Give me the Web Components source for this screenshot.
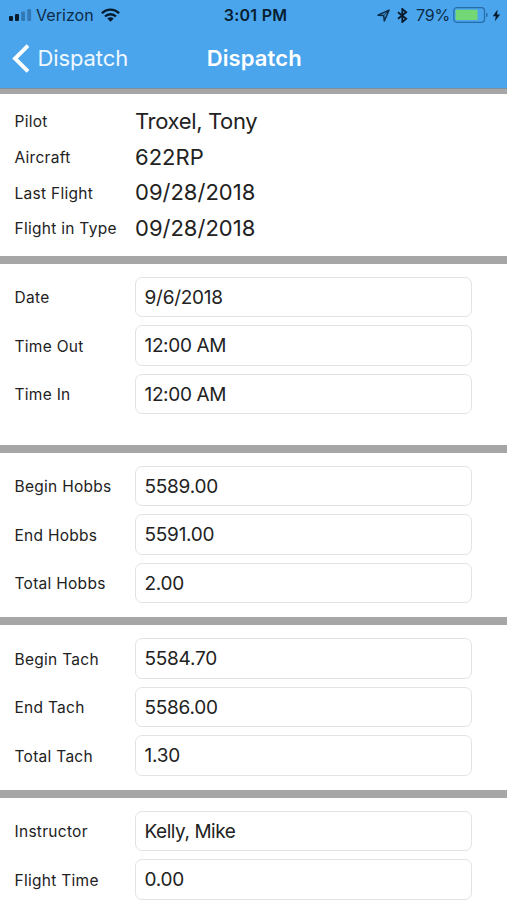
<!DOCTYPE html>
<html lang="en">
<head>
<meta charset="utf-8">
<title>Dispatch</title>
<style>
html,body{margin:0;padding:0}
body{width:507px;height:900px;overflow:hidden;background:#fff;font-family:Inter,"Liberation Sans",sans-serif;color:#222}
</style>
</head>
<body>
<dispatch-app></dispatch-app>
<script>
function define(name, markup){
  const t=document.createElement('template');
  t.innerHTML=markup;
  customElements.define(name,class extends HTMLElement{
    constructor(){super();this.attachShadow({mode:'open'}).appendChild(t.content.cloneNode(true));}
  });
}
define('status-bar',`<style>
:host{display:grid;grid-template-columns:1fr auto 1fr;align-items:center;height:30px;color:#0c2c48;font-size:16px}
div{display:flex;align-items:center}
svg{display:block;flex:none}
.l{padding-left:8px}.carrier{margin-left:4px;width:57px;letter-spacing:.05px;white-space:nowrap}
.wifi{margin-left:8px}
.time{color:#071d30;font-weight:600;font-size:16px;letter-spacing:.25px;white-space:nowrap;padding-left:4px}
.r{justify-content:flex-end;padding-right:6px}
.pct{margin-left:8px;width:33px;font-size:16px;letter-spacing:-.2px;white-space:nowrap}
</style>
<div class="l">
<svg width="24" height="14" viewBox="0 0 24 14"><g fill="#071b2c"><rect x="1" y="8" width="4" height="5" rx="1"/><rect x="7" y="6" width="4" height="7" rx="1"/></g><g fill="#3178b4"><rect x="13.2" y="3.5" width="3.8" height="9.5" rx="1"/><rect x="19.3" y="1" width="3.8" height="12" rx="1"/></g></svg>
<span class="carrier">Verizon</span>
<svg class="wifi" width="19" height="14" viewBox="0 0 19 14"><g fill="none" stroke="#071b2c" stroke-width="2.3"><path d="M.9 5.3C5.8.4 13.2.4 18.1 5.3"/><path d="M4 8.5c3.1-3 7.9-3 11 0"/></g><path d="M6.3 10.4c1.8-1.5 4.6-1.5 6.4 0L9.5 13.7z" fill="#071b2c"/></svg>
</div>
<span class="time">3:01 PM</span>
<div class="r">
<svg width="13" height="13" viewBox="0 0 13 13"><path d="M1 6.3 12 1.1 7.3 12 6.7 6.6z" fill="none" stroke="#0c2c48" stroke-width="1.5" stroke-linejoin="round"/><path d="M12 1.1 6.7 6.6" stroke="#0c2c48" stroke-width="1"/></svg>
<svg style="margin-left:7px" width="11" height="15" viewBox="0 0 11 15"><path d="M1 4.2 9.2 10.8 5.3 14V1L9.2 4.2 1 10.8" fill="none" stroke="#071b2c" stroke-width="1.8"/></svg>
<span class="pct">79%</span>
<svg style="margin-left:4px" width="36" height="16" viewBox="0 0 36 16"><rect x=".8" y=".7" width="30.7" height="14.6" rx="3" fill="none" stroke="#276da8" stroke-width="1.2"/><rect x="2.6" y="2.8" width="22" height="10.3" rx="1" fill="#74d775"/><path d="M33.2 5.5c2 .7 2 4.3 0 5z" fill="#276da8"/></svg>
<svg style="margin-left:3px" width="9" height="13" viewBox="0 0 9 13"><path d="M5.6.6.8 7.2h3L2.9 12.2 8.2 5.6H5.1z" fill="#071b2c"/></svg>
</div>`);
define('nav-bar',`<style>
:host{display:grid;grid-template-columns:1fr auto 1fr;align-items:center;height:56px;color:#fff}
.back{display:flex;align-items:center;padding-left:12px;font-size:22px;letter-spacing:-.1px;color:#f0f8ff}
svg{margin-right:7.5px}
.title{font-size:22px;font-weight:600;letter-spacing:.1px;padding-left:1.5px}
</style><div class="back"><svg width="18" height="29" viewBox="0 0 18 29"><path d="M16 1.6 3 14.5 16 27.4" fill="none" stroke="#fff" stroke-width="3.9"/></svg><span><slot name="back"></slot></span></div><span class="title"><slot></slot></span>`);
define('form-section',`<style>
:host{display:flex;flex-direction:column;box-sizing:border-box;height:var(--h);border-top:8px solid #a6a6a6;padding:13.4px 35px 0 14.5px;gap:8px;flex:none}
:host([plain]){gap:0;padding-top:10px;border-top:0}
</style><slot></slot>`);
const label='font-size:15.5px;letter-spacing:.28px;white-space:nowrap;width:120px;flex:none;';
define('info-row',`<style>
:host{display:flex;align-items:center;height:35.7px}
.label{${label}}
.value{font-size:22px;white-space:nowrap;letter-spacing:var(--track,0px);padding:0 0 2px .5px}
</style><span class="label"><slot name="label"></slot></span><span class="value"><slot></slot></span>`);
define('field-row',`<style>
:host{display:flex;align-items:center;height:40.5px}
.label{${label}padding-top:1px}
.box{box-sizing:border-box;flex:1;height:100%;border:1.5px solid #e3e3e3;border-radius:7px;display:flex;align-items:center;padding:0 0 0 9px;font-size:19px;white-space:nowrap;letter-spacing:var(--track,-.25px)}
</style><span class="label"><slot name="label"></slot></span><div class="box"><span><slot></slot></span></div>`);
define('dispatch-app',`<style>
:host{display:flex;flex-direction:column;width:507px;height:900px;overflow:hidden;background:#fff}
header{background:#4aa5ed;height:87.5px;flex:none}
.rule{height:6.5px;flex:none;background:#a6a6a6;border-top:1px solid #7f929f;box-sizing:border-box}
</style>
<header><status-bar></status-bar><nav-bar><span slot="back">Dispatch</span>Dispatch</nav-bar></header>
<div class="rule"></div>
<form-section plain style="--h:161.5px">
<info-row style="--track:-.35px"><span slot="label">Pilot</span>Troxel, Tony</info-row>
<info-row><span slot="label">Aircraft</span>622RP</info-row>
<info-row><span slot="label">Last Flight</span>09/28/2018</info-row>
<info-row><span slot="label">Flight in Type</span>09/28/2018</info-row>
</form-section>
<form-section style="--h:189px">
<field-row><span slot="label">Date</span>9/6/2018</field-row>
<field-row style="--track:-.35px"><span slot="label">Time Out</span>12:00 AM</field-row>
<field-row style="--track:-.35px"><span slot="label">Time In</span>12:00 AM</field-row>
</form-section>
<form-section style="--h:172.5px">
<field-row><span slot="label">Begin Hobbs</span>5589.00</field-row>
<field-row><span slot="label">End Hobbs</span>5591.00</field-row>
<field-row><span slot="label">Total Hobbs</span>2.00</field-row>
</form-section>
<form-section style="--h:172.5px">
<field-row><span slot="label">Begin Tach</span>5584.70</field-row>
<field-row><span slot="label">End Tach</span>5586.00</field-row>
<field-row><span slot="label">Total Tach</span>1.30</field-row>
</form-section>
<form-section style="--h:111px">
<field-row style="--track:-.45px"><span slot="label">Instructor</span>Kelly, Mike</field-row>
<field-row><span slot="label">Flight Time</span>0.00</field-row>
</form-section>`);
</script>
</body>
</html>
